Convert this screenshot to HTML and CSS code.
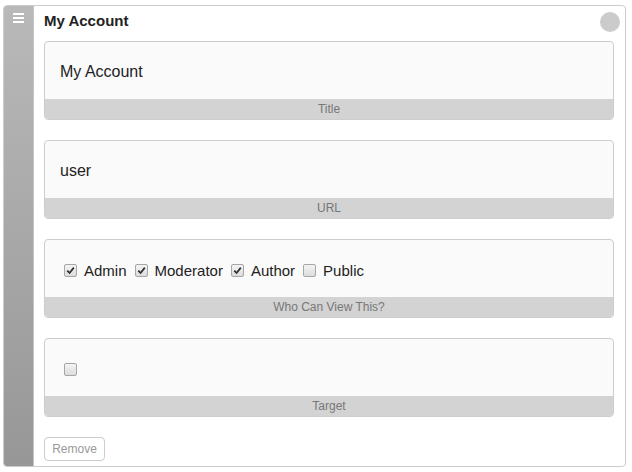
FILE: index.html
```html
<!DOCTYPE html>
<html>
<head>
<meta charset="utf-8">
<link rel="stylesheet" href="styles.css">
</head>
<body>
<div class="widget">
  <div class="sidebar">
    <svg class="handle" width="11" height="10" viewBox="0 0 11 10"><rect x="0" y="0" width="11" height="2" fill="#fff"/><rect x="0" y="4" width="11" height="2" fill="#fff"/><rect x="0" y="8" width="11" height="2" fill="#fff"/></svg>
  </div>
  <div class="main">
    <div class="header">
      <div class="title">My Account</div>
      <div class="dot"></div>
    </div>
    <div class="fields">
      <div class="card">
        <div class="value">My Account</div>
        <div class="label">Title</div>
      </div>
      <div class="card">
        <div class="value">user</div>
        <div class="label">URL</div>
      </div>
      <div class="card">
        <div class="value">
          <span class="opt"><span class="cb checked"><svg width="9" height="9" viewBox="0 0 9 9"><path d="M1.2 4.6 L3.6 7 L7.8 1.6" fill="none" stroke="#333" stroke-width="1.8"/></svg></span>Admin</span>
          <span class="opt"><span class="cb checked"><svg width="9" height="9" viewBox="0 0 9 9"><path d="M1.2 4.6 L3.6 7 L7.8 1.6" fill="none" stroke="#333" stroke-width="1.8"/></svg></span>Moderator</span>
          <span class="opt"><span class="cb checked"><svg width="9" height="9" viewBox="0 0 9 9"><path d="M1.2 4.6 L3.6 7 L7.8 1.6" fill="none" stroke="#333" stroke-width="1.8"/></svg></span>Author</span>
          <span class="opt"><span class="cb"></span>Public</span>
        </div>
        <div class="label">Who Can View This?</div>
      </div>
      <div class="card">
        <div class="value"><span class="cb"></span></div>
        <div class="label">Target</div>
      </div>
      <div class="actions">
        <button class="remove">Remove</button>
      </div>
    </div>
  </div>
</div>
</body>
</html>
```

FILE: styles.css
```css
* { box-sizing: border-box; }
html, body { margin: 0; padding: 0; background: #fff; }
body { font-family: "Liberation Sans", Arial, sans-serif; color: #222; }

.widget {
  margin: 5px 0 0 3px;
  width: 623px;
  height: 462px;
  display: flex;
  border: 1px solid #ccc;
  border-radius: 4px;
  overflow: hidden;
}

.sidebar {
  width: 30px;
  flex: none;
  background: linear-gradient(to bottom, #b9b9b9, #979797);
  border-right: 1px solid #c4c4c4;
  display: flex;
  justify-content: center;
  padding-top: 7px;
}
.handle { display: block; }

.main {
  flex: 1;
  display: flex;
  flex-direction: column;
}

.header {
  height: 29px;
  display: flex;
  align-items: center;
  justify-content: space-between;
  padding: 0 5px 0 10px;
}
.title {
  font-size: 15px;
  font-weight: bold;
  color: #222;
}
.dot {
  width: 20px;
  height: 20px;
  border-radius: 50%;
  background: #cbcbcb;
  margin-top: 2px;
}

.fields {
  padding: 6px 11px 0 10px;
  display: flex;
  flex-direction: column;
  gap: 20px;
}

.card {
  height: 79px;
  border: 1px solid #cdcdcd;
  border-radius: 4px;
  background: #fafafa;
  display: flex;
  flex-direction: column;
  overflow: hidden;
}
.value {
  flex: 1;
  display: flex;
  align-items: center;
  padding: 3px 15px 0 15px;
  font-size: 16px;
  color: #222;
}
.label {
  height: 20px;
  flex: none;
  background: #d3d3d3;
  color: #777;
  font-size: 12px;
  text-align: center;
  line-height: 20px;
}

.opt {
  display: inline-flex;
  align-items: center;
  font-size: 15px;
  margin-right: 4px;
}
.cb {
  display: inline-flex;
  align-items: center;
  justify-content: center;
  width: 13px;
  height: 13px;
  margin: 0 7px 0 4px;
  border: 1px solid #a6a6a6;
  border-radius: 2px;
  background: linear-gradient(to bottom, #f4f4f4, #dcdcdc);
}
.cb svg { display: block; }

.actions { display: flex; }
.remove {
  width: 61px;
  height: 24px;
  border: 1px solid #ccc;
  border-radius: 4px;
  background: #fff;
  color: #999;
  font-family: "Liberation Sans", Arial, sans-serif;
  font-size: 12px;
  padding: 0;
}
```
